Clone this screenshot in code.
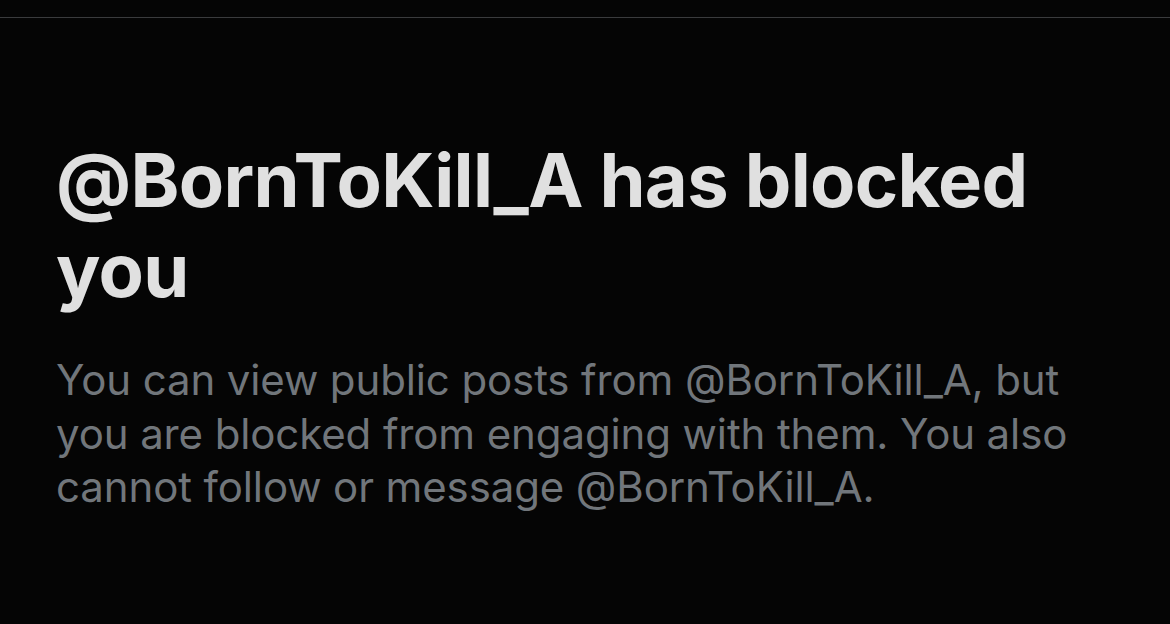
export default function App() {
  return (
    <div className="w-[1170px] h-[624px] bg-[#050505] overflow-hidden" style={{ fontFamily: 'Inter, "Noto Sans", sans-serif' }}>
      <div className="pt-[17px]">
        <div className="h-px bg-[#3a3b3d]" />
      </div>
      <div className="pl-[56px] pt-[117px]">
        <h1 className="text-[74px] leading-[90px] font-bold text-[#e0e0e0] tracking-[-0.7px] whitespace-nowrap">
          @BornToKill_A has blocked
          <br />
          you
        </h1>
        <p className="mt-[38px] text-[42px] leading-[53.5px] text-[#71767b] tracking-[-0.12px] whitespace-nowrap">
          You can view public posts from @BornToKill_A, but
          <br />
          you are blocked from engaging with them. You also
          <br />
          cannot follow or message @BornToKill_A.
        </p>
      </div>
    </div>
  );
}
